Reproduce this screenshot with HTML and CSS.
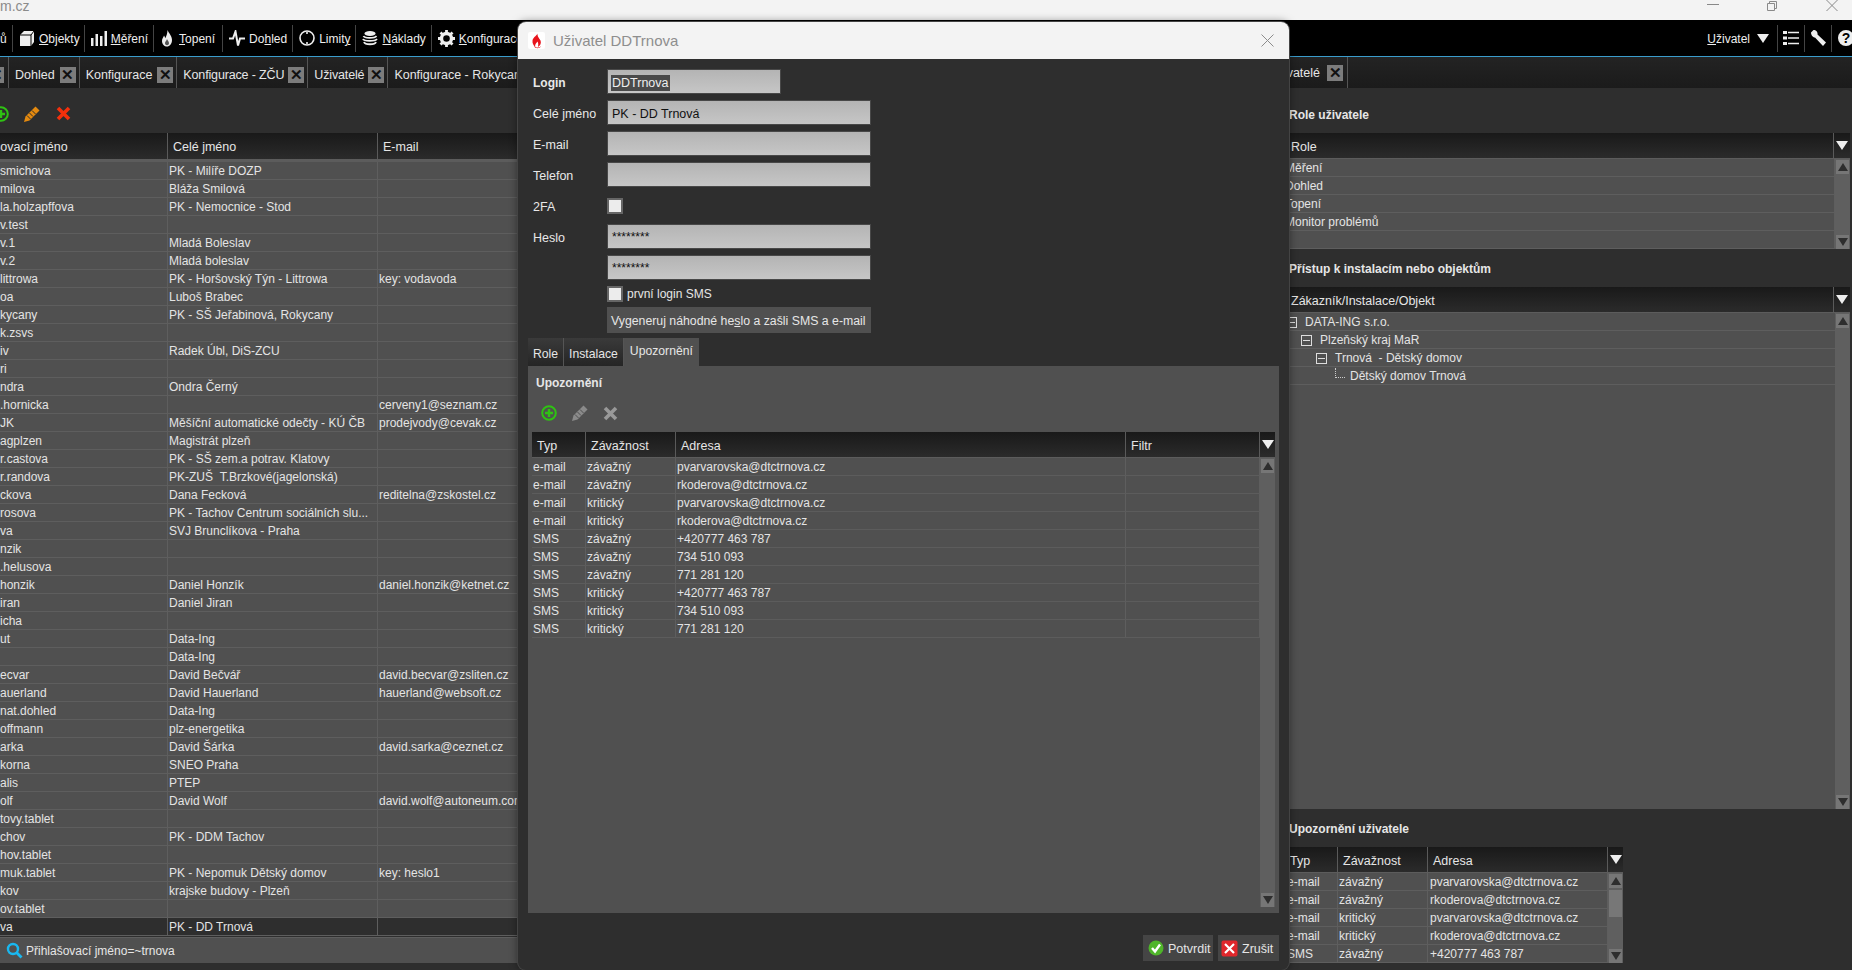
FILE: index.html
```html
<!DOCTYPE html>
<html lang="cs">
<head>
    <meta charset="UTF-8">
    <title>Uživatelé</title>
    <link rel="stylesheet" href="styles.css">
</head>
<body>
<div class="browserbar">
    <span class="url">m.cz</span>
    <div class="winbtns">
        <svg width="14" height="10" viewBox="0 0 14 10"><path d="M1 4.500h12" stroke="#888" fill="none"/></svg>
        <svg width="12" height="12" viewBox="0 0 12 12"><path d="M1.500 3.500h7v7h-7zM3.500 3.500v-2h7v7h-2" stroke="#8a8a8a" fill="none"/></svg>
        <svg width="14" height="12" viewBox="0 0 14 12"><path d="M1.500 0l11 11M12.500 0l-11 11" stroke="#8a8a8a" fill="none"/></svg>
    </div>
</div>

<div class="nav">
    <div class="nav-item first"><span>ů</span></div>
    <div class="nav-item cube-item"><svg width="16" height="17" viewBox="0 0 16 17"><path d="M1 5l4-4h10v11l-3 4H1z" fill="#eee"/><path d="M1 5h11v11M12 5l3-4" stroke="#000" fill="none"/></svg><span><u>O</u>bjekty</span></div>
    <div class="nav-item"><svg width="16" height="16" viewBox="0 0 16 16"><path d="M0 8h2.500v8H0zM4.500 4H7v12H4.500zM9 6h2.500v10H9zM13.500 1H16v15h-2.500z" fill="#eee"/></svg><span><u>M</u>ěření</span></div>
    <div class="nav-item flame-item"><svg width="12" height="17" viewBox="0 0 12 17"><path d="M6.500 0c1 3 4.500 5.500 4.500 10 0 4-2.500 6.500-5 6.500S1 14.500 1 11c0-2.500 1.500-3.500 2-5.500.8 1 1 2 1.200 2.800C5.500 6 6.500 3 6.500 0z" fill="#eee"/><path d="M6 9c.5 1.500 2 2.500 2 4.200 0 1.300-1 2-2 2s-2-.8-2-2C4 11.500 5.500 11 6 9z" fill="#555"/></svg><span><u>T</u>opení</span></div>
    <div class="nav-item"><svg width="16" height="17" viewBox="0 0 16 17"><path d="M0 8.500h4l2.500-7 2.500 14 2-7h5" stroke="#eee" stroke-width="2" fill="none"/></svg><span>Do<u>h</u>led</span></div>
    <div class="nav-item"><svg width="16" height="16" viewBox="0 0 16 16"><circle cx="8" cy="8" r="7" stroke="#eee" stroke-width="1.600" fill="none"/><path d="M8 2v2M8 12v2" stroke="#eee" stroke-width="1.600"/></svg><span>Limit<u>y</u></span></div>
    <div class="nav-item"><svg width="16" height="16" viewBox="0 0 16 16"><ellipse cx="8" cy="3.500" rx="5.500" ry="2.500" fill="#eee"/><path d="M1.500 6c1 2.500 11 2.500 13 0M1 9c1 2.500 12 2.500 14 0M2 12c1 3 11 3 12 0" stroke="#eee" stroke-width="1.800" fill="none"/></svg><span><u>N</u>áklady</span></div>
    <div class="nav-item"><svg width="17" height="17" viewBox="0 0 17 17"><circle cx="8.500" cy="8.500" r="5" stroke="#eee" stroke-width="3.400" fill="none"/><path d="M8.500 0v17M0 8.500h17M2.500 2.500l12 12M14.500 2.500l-12 12" stroke="#eee" stroke-width="2.800" stroke-dasharray="3 11"/></svg><span><u>K</u>onfigurace</span></div>
    <div class="nav-right">
        <div class="user-menu"><span><u>U</u>živatel</span><i class="arrow"></i></div>
        <div class="nav-tool"><svg width="16" height="16" viewBox="0 0 16 16"><path d="M0 1h4v3H0zM0 6.500h4v3H0zM0 12h4v3H0z" fill="#eee"/><path d="M5 2.500h11M5 8h11M5 13.500h11" stroke="#eee" stroke-width="1.500"/></svg></div>
        <div class="nav-tool"><svg width="16" height="16" viewBox="0 0 16 16"><path d="M1 2.500L3.500 0c2.500 0 4.500 2 4 4.500L16 12.500 13 16 5 7.500C2.800 7.500 1 5 1 2.500z" fill="#eee"/></svg></div>
        <div class="nav-tool help"><span>?</span></div>
    </div>
</div>

<div class="workspace">
    <div class="pane-left">
        <div class="tabbar">
            <div class="tab tab-cut"><b class="close">✕</b></div>
            <div class="tab"><span>Dohled</span><b class="close">✕</b></div>
            <div class="tab"><span>Konfigurace</span><b class="close">✕</b></div>
            <div class="tab"><span>Konfigurace - ZČU</span><b class="close">✕</b></div>
            <div class="tab"><span>Uživatelé</span><b class="close">✕</b></div>
            <div class="tab"><span>Konfigurace - Rokycany</span></div>
        </div>
        <div class="toolbar">
            <svg class="tool-plus" width="16" height="16" viewBox="0 0 16 16"><circle cx="8" cy="8" r="6.800" stroke="#2fc213" stroke-width="2" fill="none"/><path d="M8 4v8M4 8h8" stroke="#2fc213" stroke-width="2.400"/></svg>
            <svg width="16" height="16" viewBox="0 0 16 16"><path d="M0 16l1.500-5.500L11.500.5l4 4-10 10z" fill="#e58a0f"/><path d="M3 9.500l3.500 3.500M5.500 7l3.500 3.500M8 4.500l3.500 3.500" stroke="#2e2e2e"/></svg>
            <svg width="15" height="15" viewBox="0 0 15 15"><path d="M2 2l11 11M13 2L2 13" stroke="#f3300c" stroke-width="3.600"/></svg>
        </div>
        <div class="grid">
            <div class="grid-head cols-users big-gap">
                <div><span class="cut-head">sovací jméno</span></div><div>Celé jméno</div><div>E-mail</div>
            </div>
            <div class="row cols-users"><div>smichova</div><div>PK - Milíře DOZP</div><div></div></div>
            <div class="row cols-users"><div>milova</div><div>Bláža Smilová</div><div></div></div>
            <div class="row cols-users"><div>la.holzapffova</div><div>PK - Nemocnice - Stod</div><div></div></div>
            <div class="row cols-users"><div>v.test</div><div></div><div></div></div>
            <div class="row cols-users"><div>v.1</div><div>Mladá Boleslav</div><div></div></div>
            <div class="row cols-users"><div>v.2</div><div>Mladá boleslav</div><div></div></div>
            <div class="row cols-users"><div>littrowa</div><div>PK - Horšovský Týn - Littrowa</div><div>key: vodavoda</div></div>
            <div class="row cols-users"><div>oa</div><div>Luboš Brabec</div><div></div></div>
            <div class="row cols-users"><div>kycany</div><div>PK - SŠ Jeřabinová, Rokycany</div><div></div></div>
            <div class="row cols-users"><div>k.zsvs</div><div></div><div></div></div>
            <div class="row cols-users"><div>iv</div><div>Radek Úbl, DiS-ZCU</div><div></div></div>
            <div class="row cols-users"><div>ri</div><div></div><div></div></div>
            <div class="row cols-users"><div>ndra</div><div>Ondra Černý</div><div></div></div>
            <div class="row cols-users"><div>.hornicka</div><div></div><div>cerveny1@seznam.cz</div></div>
            <div class="row cols-users"><div>JK</div><div>Měšíční automatické odečty - KÚ ČB</div><div>prodejvody@cevak.cz</div></div>
            <div class="row cols-users"><div>agplzen</div><div>Magistrát plzeň</div><div></div></div>
            <div class="row cols-users"><div>r.castova</div><div>PK - SŠ zem.a potrav. Klatovy</div><div></div></div>
            <div class="row cols-users"><div>r.randova</div><div>PK-ZUŠ &nbsp;T.Brzkové(jagelonská)</div><div></div></div>
            <div class="row cols-users"><div>ckova</div><div>Dana Fecková</div><div>reditelna@zskostel.cz</div></div>
            <div class="row cols-users"><div>rosova</div><div>PK - Tachov Centrum sociálních slu...</div><div></div></div>
            <div class="row cols-users"><div>va</div><div>SVJ Brunclíkova - Praha</div><div></div></div>
            <div class="row cols-users"><div>nzik</div><div></div><div></div></div>
            <div class="row cols-users"><div>.helusova</div><div></div><div></div></div>
            <div class="row cols-users"><div>honzik</div><div>Daniel Honzík</div><div>daniel.honzik@ketnet.cz</div></div>
            <div class="row cols-users"><div>iran</div><div>Daniel Jiran</div><div></div></div>
            <div class="row cols-users"><div>icha</div><div></div><div></div></div>
            <div class="row cols-users"><div>ut</div><div>Data-Ing</div><div></div></div>
            <div class="row cols-users"><div></div><div>Data-Ing</div><div></div></div>
            <div class="row cols-users"><div>ecvar</div><div>David Bečvář</div><div>david.becvar@zsliten.cz</div></div>
            <div class="row cols-users"><div>auerland</div><div>David Hauerland</div><div>hauerland@websoft.cz</div></div>
            <div class="row cols-users"><div>nat.dohled</div><div>Data-Ing</div><div></div></div>
            <div class="row cols-users"><div>offmann</div><div>plz-energetika</div><div></div></div>
            <div class="row cols-users"><div>arka</div><div>David Šárka</div><div>david.sarka@ceznet.cz</div></div>
            <div class="row cols-users"><div>korna</div><div>SNEO Praha</div><div></div></div>
            <div class="row cols-users"><div>alis</div><div>PTEP</div><div></div></div>
            <div class="row cols-users"><div>olf</div><div>David Wolf</div><div>david.wolf@autoneum.com</div></div>
            <div class="row cols-users"><div>tovy.tablet</div><div></div><div></div></div>
            <div class="row cols-users"><div>chov</div><div>PK - DDM Tachov</div><div></div></div>
            <div class="row cols-users"><div>hov.tablet</div><div></div><div></div></div>
            <div class="row cols-users"><div>muk.tablet</div><div>PK - Nepomuk Dětský domov</div><div>key: heslo1</div></div>
            <div class="row cols-users"><div>kov</div><div>krajske budovy - Plzeň</div><div></div></div>
            <div class="row cols-users"><div>ov.tablet</div><div></div><div></div></div>
            <div class="row cols-users selected"><div>va</div><div>PK - DD Trnová</div><div></div></div>
        </div>
        <div class="filterbar">
            <svg width="17" height="17" viewBox="0 0 17 17"><circle cx="7" cy="7" r="5" stroke="#19b8f0" stroke-width="2.400" fill="none"/><path d="M10.500 10.500l5 5" stroke="#19b8f0" stroke-width="2.800"/></svg>
            <span>Přihlašovací jméno=~trnova</span>
        </div>
    </div>

    <div class="pane-right">
        <div class="tabbar">
            <div class="tab tab-right"><span>vatelé</span><b class="close">✕</b></div>
        </div>
        <div class="section-title first-title">Role uživatele</div>
        <div class="grid-scroll fill-width">
            <div class="grid-head cols-single">
                <div>Role</div><div class="head-arrow"><i class="arrow"></i></div>
            </div>
            <div class="grid-body">
                <div class="rows clip-left">
                    <div class="row cols-one"><div>Měření</div></div>
                    <div class="row cols-one"><div>Dohled</div></div>
                    <div class="row cols-one"><div>Topení</div></div>
                    <div class="row cols-one"><div>Monitor problémů</div></div>
                    <div class="row cols-one"><div></div></div>
                </div>
                <div class="scrollbar"><i class="sb-btn up"></i><i class="sb-btn down"></i></div>
            </div>
        </div>
        <div class="section-title">Přístup k instalacím nebo objektům</div>
        <div class="grid-scroll fill-width tree-grid">
            <div class="grid-head cols-single">
                <div>Zákazník/Instalace/Objekt</div><div class="head-arrow"><i class="arrow"></i></div>
            </div>
            <div class="grid-body">
                <div class="rows">
                    <div class="row tree lvl0"><i class="minus"></i><span>DATA-ING s.r.o.</span></div>
                    <div class="row tree lvl1"><i class="minus"></i><span>Plzeňský kraj MaR</span></div>
                    <div class="row tree lvl2"><i class="minus"></i><span>Trnová &nbsp;- Dětský domov</span></div>
                    <div class="row tree lvl3"><i class="leaf"></i><span>Dětský domov Trnová</span></div>
                </div>
                <div class="scrollbar"><i class="sb-btn up"></i><i class="sb-btn down"></i></div>
            </div>
        </div>
        <div class="section-title">Upozornění uživatele</div>
        <div class="grid-scroll small-width">
            <div class="grid-head cols-side">
                <div>Typ</div><div>Závažnost</div><div>Adresa</div><div class="head-arrow"><i class="arrow"></i></div>
            </div>
            <div class="grid-body">
                <div class="rows clip-left-small">
                    <div class="row cols-side-body"><div>e-mail</div><div>závažný</div><div>pvarvarovska@dtctrnova.cz</div></div>
                    <div class="row cols-side-body"><div>e-mail</div><div>závažný</div><div>rkoderova@dtctrnova.cz</div></div>
                    <div class="row cols-side-body"><div>e-mail</div><div>kritický</div><div>pvarvarovska@dtctrnova.cz</div></div>
                    <div class="row cols-side-body"><div>e-mail</div><div>kritický</div><div>rkoderova@dtctrnova.cz</div></div>
                    <div class="row cols-side-body"><div>SMS</div><div>závažný</div><div>+420777 463 787</div></div>
                </div>
                <div class="scrollbar"><i class="sb-btn up"></i><i class="sb-thumb"></i><i class="sb-btn down"></i></div>
            </div>
        </div>
    </div>
</div>

<div class="dialog">
    <div class="dialog-title">
        <span class="dialog-logo"><svg width="11" height="16" viewBox="0 0 11 16"><path d="M6.500 0c.5 2-4.500 4-5 7.500C1 10.500 3 13 5.500 16c-2.500-3.500-1-5 1-7.500.6 1.600 1.200 2.500.4 5.500 2.500-1.500 3.600-4 2.600-6.500C8.500 5.500 6 3.500 6.500 0z" fill="#e8141c"/><path d="M3 13c2 2 5 2 7 0-1 3-6 3-7 0z" fill="#e8141c"/></svg></span>
        <span class="dialog-name">Uživatel DDTrnova</span>
        <svg class="dialog-close" width="13" height="13" viewBox="0 0 13 13"><path d="M.5.5l12 12M12.500.5l-12 12" stroke="#8c8c8c" fill="none"/></svg>
    </div>
    <div class="form">
        <label class="strong">Login</label>
        <div class="input short"><span class="picked">DDTrnova</span></div>
        <label>Celé jméno</label>
        <div class="input">PK - DD Trnová</div>
        <label>E-mail</label>
        <div class="input"></div>
        <label>Telefon</label>
        <div class="input"></div>
        <label>2FA</label>
        <div class="check-row"><i class="check"></i></div>
        <label>Heslo</label>
        <div class="input secret">********</div>
        <label></label>
        <div class="input secret">********</div>
        <label></label>
        <div class="check-row tight"><i class="check"></i><span>první login SMS</span></div>
        <label></label>
        <div class="gen-btn">Vygeneruj náhodné he<u>s</u>lo a zašli SMS a e-mail</div>
    </div>
    <div class="dlg-tabs">
        <div class="dlg-tab">Role</div>
        <div class="dlg-tab">Instalace</div>
        <div class="dlg-tab active">Upozornění</div>
    </div>
    <div class="dlg-panel">
        <div class="panel-title">Upozornění</div>
        <div class="panel-tools">
            <svg width="16" height="16" viewBox="0 0 16 16"><circle cx="8" cy="8" r="6.800" stroke="#2fc213" stroke-width="2" fill="none"/><path d="M8 4v8M4 8h8" stroke="#2fc213" stroke-width="2.400"/></svg>
            <svg width="16" height="16" viewBox="0 0 16 16"><path d="M0 16l1.500-5.500L11.500.5l4 4-10 10z" fill="#8a8a8a"/><path d="M3 9.500l3.500 3.500M5.500 7l3.500 3.500M8 4.500l3.500 3.500" stroke="#505050"/></svg>
            <svg width="15" height="15" viewBox="0 0 15 15"><path d="M2 2l11 11M13 2L2 13" stroke="#999" stroke-width="3.600"/></svg>
        </div>
        <div class="grid-scroll panel-grid">
            <div class="grid-head cols-notif">
                <div>Typ</div><div>Závažnost</div><div>Adresa</div><div>Filtr</div><div class="head-arrow"><i class="arrow"></i></div>
            </div>
            <div class="grid-body">
                <div class="rows">
                    <div class="row cols-notif-body"><div>e-mail</div><div>závažný</div><div>pvarvarovska@dtctrnova.cz</div><div></div></div>
                    <div class="row cols-notif-body"><div>e-mail</div><div>závažný</div><div>rkoderova@dtctrnova.cz</div><div></div></div>
                    <div class="row cols-notif-body"><div>e-mail</div><div>kritický</div><div>pvarvarovska@dtctrnova.cz</div><div></div></div>
                    <div class="row cols-notif-body"><div>e-mail</div><div>kritický</div><div>rkoderova@dtctrnova.cz</div><div></div></div>
                    <div class="row cols-notif-body"><div>SMS</div><div>závažný</div><div>+420777 463 787</div><div></div></div>
                    <div class="row cols-notif-body"><div>SMS</div><div>závažný</div><div>734 510 093</div><div></div></div>
                    <div class="row cols-notif-body"><div>SMS</div><div>závažný</div><div>771 281 120</div><div></div></div>
                    <div class="row cols-notif-body"><div>SMS</div><div>kritický</div><div>+420777 463 787</div><div></div></div>
                    <div class="row cols-notif-body"><div>SMS</div><div>kritický</div><div>734 510 093</div><div></div></div>
                    <div class="row cols-notif-body"><div>SMS</div><div>kritický</div><div>771 281 120</div><div></div></div>
                </div>
                <div class="scrollbar"><i class="sb-btn up"></i><i class="sb-btn down"></i></div>
            </div>
        </div>
    </div>
    <div class="dlg-footer">
        <div class="foot-btn ok">
            <svg width="16" height="16" viewBox="0 0 16 16"><circle cx="8" cy="8" r="7.500" fill="#4fb52a"/><path d="M4 8l3 3.500L12 4.500" stroke="#fff" stroke-width="2.400" fill="none"/></svg>
            <span>Potvrdit</span>
        </div>
        <div class="foot-btn cancel">
            <svg width="17" height="17" viewBox="0 0 17 17"><rect x=".5" y=".5" width="16" height="16" rx="2" fill="#e0272c"/><path d="M4 4l9 9M13 4l-9 9" stroke="#fff" stroke-width="2.200"/></svg>
            <span>Zrušit</span>
        </div>
    </div>
</div>
</body>
</html>
```

FILE: styles.css
```css
*{
    margin:0;
    padding:0;
    box-sizing:border-box;
}
html,body{
    width:1852px;
    height:970px;
    overflow:hidden;
}
body{
    display:flex;
    flex-direction:column;
    background:#2e2e2e;
    color:#e6e6e6;
    font-family:"Liberation Sans",Arial,sans-serif;
    font-size:12.5px;
}
svg{
    display:block;
    flex:none;
}

/* okno prohlizece */
.browserbar{
    height:20px;
    flex:none;
    display:flex;
    justify-content:space-between;
    background:#f3f3f3;
    overflow:hidden;
}
.url{
    font-size:14px;
    line-height:12px;
    color:#8b8b8b;
}
.winbtns{
    display:flex;
    align-items:flex-start;
    gap:46px;
    padding-right:13px;
}
.winbtns svg:last-child{
    margin-left:1px;
}

/* hlavni menu */
.nav{
    height:37px;
    flex:none;
    display:flex;
    align-items:center;
    background:#000;
    border-bottom:1px solid #3a9ccc;
    color:#eee;
    font-size:12px;
}
.nav-item{
    height:27px;
    display:flex;
    align-items:center;
    gap:4px;
    padding:0 5px 0 6px;
    border-right:1px solid #444;
    white-space:nowrap;
}
.nav-item span,.user-menu span{
    padding-top:2px;
}
.nav-item.first{
    width:13px;
    padding:0;
}
.cube-item{
    padding-right:4px;
}
.flame-item{
    padding:0 7px 0 7px;
    gap:6px;
}
.nav-right{
    margin-left:auto;
    display:flex;
    align-items:center;
}
.user-menu{
    display:flex;
    align-items:center;
    gap:7px;
    height:27px;
    padding-right:8px;
    border-right:1px solid #444;
}
.nav-tool{
    height:27px;
    display:flex;
    align-items:center;
    padding:0 5px;
    border-right:1px solid #444;
}
.nav-tool.help{
    border:0;
    padding:0 0 0 6px;
    margin-right:-2px;
}
.help span{
    display:block;
    width:16px;
    height:16px;
    border-radius:50%;
    background:#eee;
    color:#000;
    font-weight:bold;
    font-size:14px;
    line-height:16px;
    text-align:center;
}
.arrow{
    display:block;
    width:0;
    height:0;
    border-left:6px solid transparent;
    border-right:6px solid transparent;
    border-top:9px solid #eee;
}

/* pracovni plocha */
.workspace{
    flex:1;
    display:flex;
    min-height:0;
}
.pane-left{
    width:1289px;
    flex:none;
    overflow:hidden;
}
.pane-right{
    flex:1;
    min-width:0;
    overflow:hidden;
    display:flex;
    flex-direction:column;
}
.tabbar{
    height:31px;
    flex:none;
    display:flex;
    background:linear-gradient(#232323,#1b1b1b);
}
.tab{
    display:flex;
    align-items:center;
    gap:5px;
    padding:5px 3px 0 6px;
    border-right:1px solid #555;
    white-space:nowrap;
}
.tab:nth-child(4),.tab:nth-child(5){
    gap:4px;
    letter-spacing:-.15px;
}
.tab-cut{
    width:9px;
    padding:5px 4px 0 0;
    justify-content:flex-end;
}
.tab-right{
    padding:1px 4px 0 0;
    gap:7px;
    width:59px;
    justify-content:flex-end;
}
.close{
    flex:none;
    display:block;
    width:16px;
    height:16px;
    background:#7c7c7c;
    color:#111;
    font-size:15px;
    font-weight:bold;
    line-height:16px;
    text-align:center;
}
.toolbar{
    height:45px;
    display:flex;
    align-items:center;
    gap:16px;
    padding-top:6px;
}
.tool-plus{
    margin-left:-7px;
    margin-right:-1px;
}

/* tabulky */
.grid-head{
    height:26px;
    display:grid;
    align-items:stretch;
    background:linear-gradient(#191919,#2b2b2b);
    border-bottom:1px solid #5c5c5c;
    flex:none;
}
.grid-head>div{
    display:flex;
    align-items:center;
    padding:2px 0 0 5px;
    border-right:1px solid #5a5a5a;
    overflow:hidden;
    white-space:nowrap;
}
.grid-head>div:last-child{
    border-right:0;
}
.big-gap{
    height:29px;
    border-bottom:3px solid #5c5c5c;
}
.cut-head{
    margin-left:-6px;
}
.row{
    height:18px;
    display:grid;
    background:#505050;
    border-bottom:1px solid #5e5e5e;
    font-size:12px;
    line-height:19px;
    color:#e4e4e4;
}
.row>div{
    padding-left:1px;
    border-right:1px solid #5e5e5e;
    overflow:hidden;
    white-space:nowrap;
}
.row>div:first-child{
    padding-left:0;
}
.row.selected{
    background:#2e2e2e;
}
.cols-users{
    grid-template-columns:168px 210px 1fr;
}
.cols-users.grid-head>div:first-child{
    padding-left:0;
}
.cols-single{
    grid-template-columns:1fr 16px;
}
.cols-single>div:first-child{
    padding-left:2px;
}
.cols-one{
    grid-template-columns:1fr;
}
.cols-side{
    grid-template-columns:49px 90px 180px 15px;
}
.cols-side-body{
    grid-template-columns:49px 90px 1fr;
}
.cols-side-body>div:nth-child(3){
    padding-left:2px;
}
.cols-notif{
    grid-template-columns:54px 90px 450px 134px 15px;
}
.cols-notif-body{
    grid-template-columns:54px 90px 450px 1fr;
}
.cols-notif-body>div:first-child{
    padding-left:1px;
}
.cols-side>div:first-child{
    padding-left:1px;
}
.head-arrow{
    padding:0 !important;
    justify-content:center;
}
.filterbar{
    height:26px;
    margin-top:1px;
    display:flex;
    align-items:center;
    gap:3px;
    padding-left:6px;
    background:#505050;
    border-top:1px solid #5e5e5e;
    font-size:12px;
}

/* tabulka se scrollbarem */
.grid-scroll{
    display:flex;
    flex-direction:column;
}
.grid-body{
    flex:1;
    min-height:0;
    display:flex;
    background:#505050;
}
.rows{
    flex:1;
    min-width:0;
}
.scrollbar{
    width:15px;
    flex:none;
    display:flex;
    flex-direction:column;
    justify-content:space-between;
    padding:1px 1px 0;
    background:#5f5f5f;
}
.sb-btn{
    display:block;
    height:14px;
    background:#767676;
    position:relative;
}
.sb-btn:after{
    content:"";
    position:absolute;
    left:2px;
    border-left:5px solid transparent;
    border-right:5px solid transparent;
}
.sb-btn.up:after{
    top:3px;
    border-bottom:8px solid #2e2e2e;
}
.sb-btn.down:after{
    top:3px;
    border-top:8px solid #2e2e2e;
}
.sb-thumb{
    display:block;
    height:27px;
    margin-bottom:32px;
    background:#777;
}
.scrollbar .up+.sb-thumb{
    margin-top:2px;
}
.fill-width{
    width:561px;
    flex:none;
}
.fill-width .grid-body{
    height:90px;
    flex:none;
}
.tree-grid{
    height:522px;
}
.tree-grid .grid-body{
    flex:1;
    height:auto;
}
.small-width{
    width:334px;
    flex:none;
}
.small-width .grid-body{
    height:90px;
    flex:none;
}
.clip-left .row>div{
    text-indent:-4px;
}
.clip-left-small .row>div:first-child{
    text-indent:-2px;
}
.section-title{
    height:38px;
    flex:none;
    display:flex;
    align-items:center;
    padding-top:2px;
    font-size:12px;
    font-weight:bold;
}
.first-title{
    height:45px;
    padding-top:9px;
}

/* strom */
.tree{
    display:flex;
    align-items:center;
    white-space:nowrap;
}
.tree span{
    padding-top:2px;
}
.tree i{
    display:block;
    flex:none;
    margin-right:8px;
}
.minus{
    width:11px;
    height:11px;
    margin-top:1px;
    border:1px solid #ddd;
    background:linear-gradient(#ddd,#ddd) center/7px 1px no-repeat;
}
.leaf{
    width:10px;
    height:10px;
    margin-top:-6px;
    border-left:1px dotted #ccc;
    border-bottom:1px dotted #ccc;
}
.lvl0{
    padding-left:1px;
}
.lvl0 .minus{
    margin-left:-4px;
    margin-right:8px;
}
.lvl1{
    padding-left:12px;
}
.lvl2{
    padding-left:27px;
}
.lvl3{
    padding-left:46px;
}
.lvl3 .leaf{
    margin-right:5px;
}

/* dialog uzivatele */
.dialog{
    position:absolute;
    left:518px;
    top:22px;
    width:771px;
    height:948px;
    display:flex;
    flex-direction:column;
    background:#2e2e2e;
    border-radius:8px;
    overflow:hidden;
    box-shadow:0 0 0 1px #444,0 0 8px rgba(0,0,0,.5);
}
.dialog-title{
    height:37px;
    flex:none;
    display:flex;
    align-items:center;
    background:#f3f3f3;
    padding-left:10px;
    font-size:15px;
    color:#8e8e8e;
}
.dialog-logo{
    width:17px;
    height:17px;
    margin-right:8px;
    display:flex;
    align-items:center;
    justify-content:center;
    background:#fff;
    border-radius:2px;
}
.dialog-close{
    margin-left:auto;
    margin-right:15px;
}
.form{
    display:grid;
    grid-template-columns:74px 264px;
    row-gap:6px;
    padding:10px 0 0 15px;
    align-items:center;
}
.form label{
    padding-top:2px;
    color:#e8e8e8;
}
.form label.strong{
    font-size:12px;
    font-weight:bold;
}
.input{
    height:25px;
    display:flex;
    align-items:center;
    padding:2px 0 0 4px;
    background:linear-gradient(#b4b4b4,#c6c6c6);
    border:1px solid #484848;
    color:#111;
}
.input.short{
    width:174px;
}
.picked{
    background:#4a4a4a;
    color:#eee;
    padding:1px;
    margin-left:-1px;
}
.secret{
    align-items:flex-start;
    padding-top:5px;
    font-size:12px;
}
.check-row{
    height:25px;
    display:flex;
    align-items:center;
    gap:4px;
    font-size:12px;
}
.check-row span{
    padding-top:1px;
}
.check-row.tight{
    height:15px;
}
.check{
    display:block;
    flex:none;
    width:16px;
    height:16px;
    background:#ececec;
    border:2px solid #666;
}
.gen-btn{
    height:26px;
    display:flex;
    align-items:center;
    padding:1px 0 0 4px;
    background:#505050;
    font-size:12.3px;
    white-space:pre;
}
.dlg-tabs{
    height:28px;
    flex:none;
    margin:5px 0 0 10px;
    display:flex;
    font-size:12.2px;
}
.dlg-tab{
    padding:3px 5px 0;
    display:flex;
    align-items:center;
    background:linear-gradient(#3a3a3a,#252525);
    border-right:1px solid #555;
}
.dlg-tab.active{
    background:#505050;
    padding:0 6px 3px;
    border:0;
}
.dlg-panel{
    height:547px;
    flex:none;
    margin:0 10px;
    padding-left:4px;
    display:flex;
    flex-direction:column;
    background:#505050;
}
.panel-title{
    height:34px;
    flex:none;
    display:flex;
    align-items:center;
    padding-left:4px;
    font-size:12px;
    font-weight:bold;
}
.panel-tools{
    height:32px;
    flex:none;
    display:flex;
    align-items:center;
    gap:15px;
    padding:0 0 6px 9px;
}
.panel-grid{
    flex:none;
    width:743px;
    height:475px;
}
.panel-grid .row{
    border-color:#5c5c5c;
}
.dlg-footer{
    flex:1;
    display:flex;
    justify-content:flex-end;
    gap:5px;
    padding:22px 10px 0 0;
}
.foot-btn{
    height:26px;
    display:flex;
    align-items:center;
    gap:4px;
    padding-left:5px;
    background:#454545;
}
.foot-btn span{
    padding-top:2px;
}
.foot-btn.ok{
    width:70px;
}
.foot-btn.cancel{
    width:61px;
    padding-left:3px;
}
```
